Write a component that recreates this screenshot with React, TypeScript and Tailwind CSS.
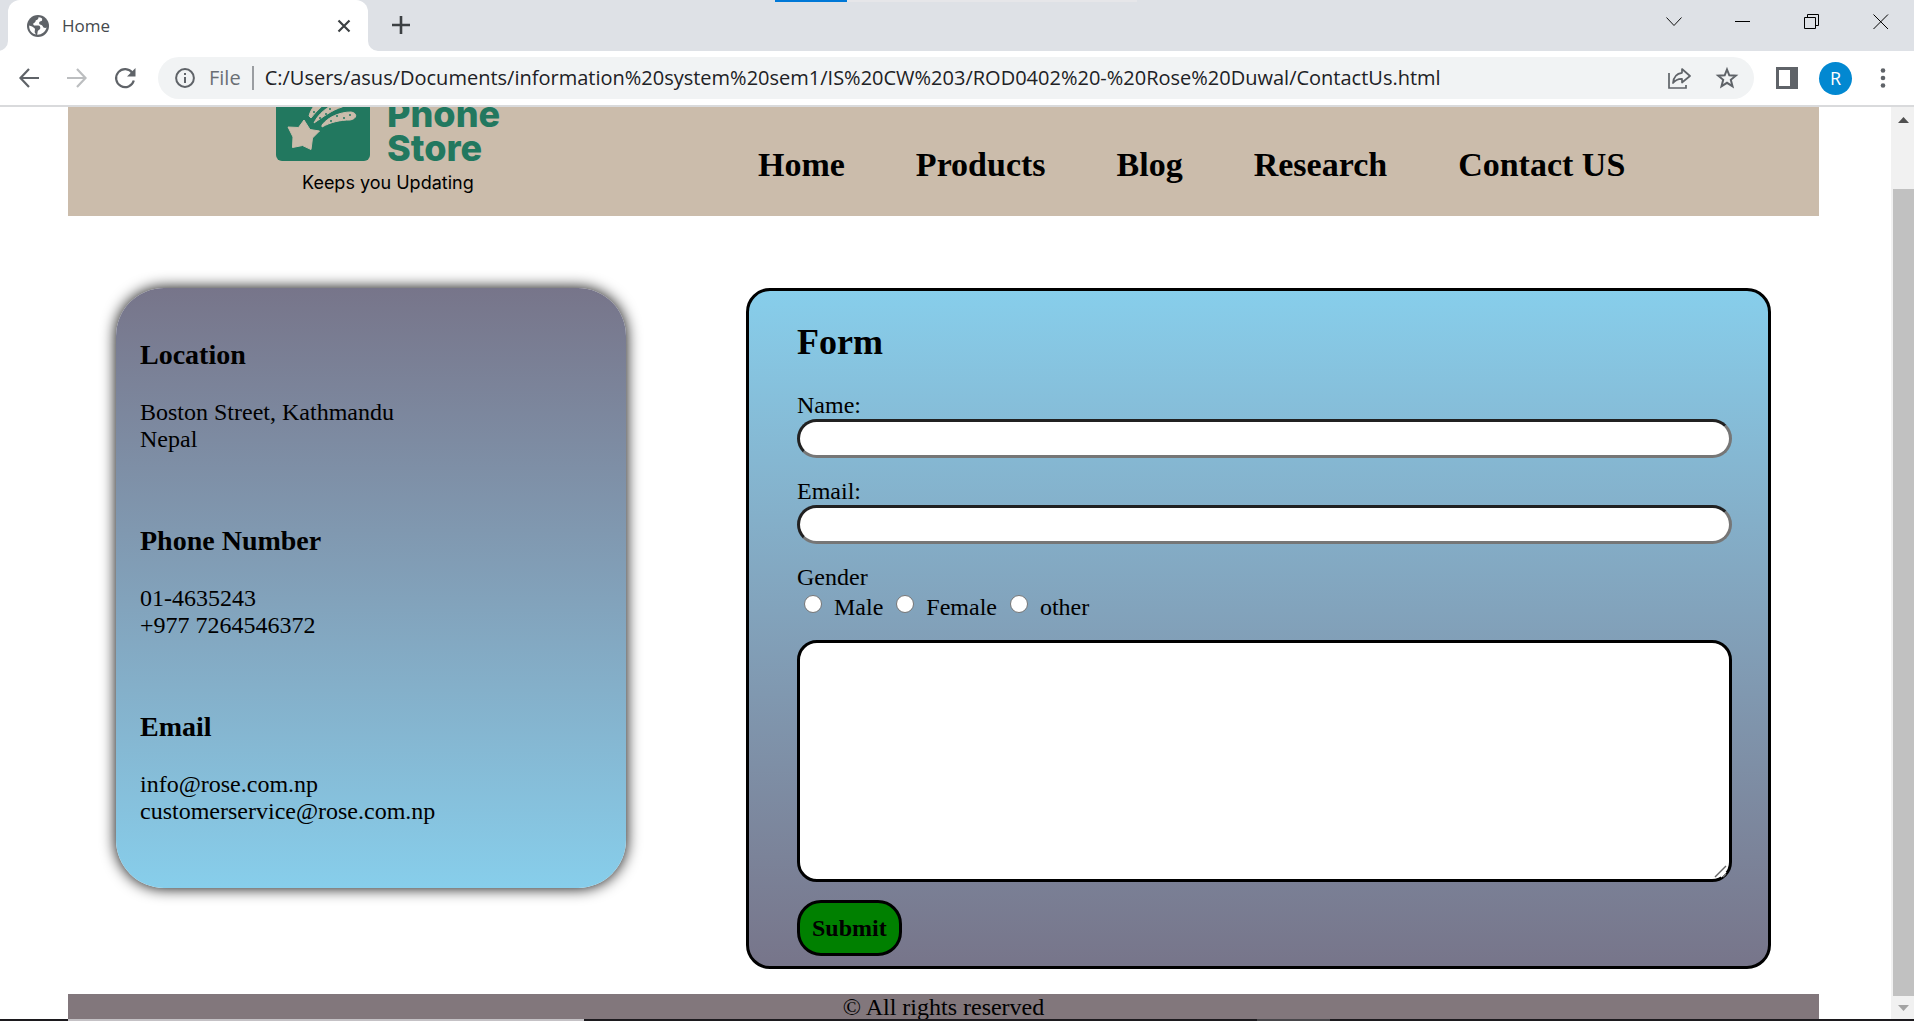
import type { ReactNode } from "react";

function GlobeIcon() {
  return (
    <svg viewBox="0 0 22 22" className="size-[22px]" aria-hidden="true">
      <circle cx="11" cy="11" r="11" fill="#5f6368" />
      <path
        d="M11.5 2.2C11.5 4 10.5 5 8.800 5.300C8.600 7 7.600 8 6.200 8.400C6.200 9.800 6.600 10.400 8 10.400H11.400C12.800 10.600 13.400 11.600 13.300 13C13.200 14.500 12 14.800 11.200 15.400C10.400 16.200 10.700 17.600 10.200 19.700C14 20 18.400 17.300 19.600 12.600C18.400 13.400 17.200 12.900 16.200 12.200C15.600 10.200 14.400 9.700 12.800 9.500C11.600 8.200 12.100 6.600 13.600 6.300C15.200 6.100 15.300 5 15.100 3.400C14 2.600 12.800 2.200 11.500 2.200Z"
        fill="#fff"
      />
      <path d="M2.200 10.500C4 10.900 6.300 12 7.800 13.600C8.300 15 7.600 16 7.700 17C7.800 18 8.500 18.500 9 19.500C4.800 18.800 1.900 15 2.200 10.500Z" fill="#fff" />
    </svg>
  );
}

function IconButton({ label, children }: { label: string; children: ReactNode }) {
  return (
    <button type="button" aria-label={label} className="flex size-6 shrink-0 items-center justify-center">
      {children}
    </button>
  );
}

function TabStrip() {
  return (
    <div className="relative flex h-[51px] shrink-0 items-start bg-[#dee1e6] pl-2">
      <div className="relative flex h-[51px] w-[360px] items-center gap-[13px] rounded-t-xl bg-white pr-[17px] pl-[19px]">
        <GlobeIcon />
        <span className="flex-1 text-[17px] text-[#45494d]">Home</span>
        <button type="button" aria-label="Close tab">
          <svg viewBox="0 0 14 14" className="size-[14px]">
            <path d="M1.500 1.500L12.500 12.500M12.500 1.500L1.500 12.500" stroke="#3c4043" strokeWidth="2.200" />
          </svg>
        </button>
        <svg viewBox="0 0 10 10" className="absolute bottom-0 -left-[10px] size-[10px]" aria-hidden="true">
          <path d="M10 0V10H0A10 10 0 0 0 10 0Z" fill="#fff" />
        </svg>
        <svg viewBox="0 0 10 10" className="absolute -right-[10px] bottom-0 size-[10px]" aria-hidden="true">
          <path d="M0 0V10H10A10 10 0 0 1 0 0Z" fill="#fff" />
        </svg>
      </div>
      <button type="button" aria-label="New tab" className="mt-4 ml-6">
        <svg viewBox="0 0 18 18" className="size-[18px]">
          <path d="M9 0V18M0 9H18" stroke="#3c4043" strokeWidth="2.600" />
        </svg>
      </button>
      <div className="absolute top-0 left-[775px] flex h-0.5 w-[362px] bg-[#e6e6e9]">
        <div className="w-[72px] bg-[#0078d7]" />
      </div>
      <div className="ml-auto flex items-center gap-[53px] pt-3.5 pr-[25px]">
        <button type="button" aria-label="Search tabs">
          <svg viewBox="0 0 16 16" className="size-4" fill="none" stroke="#111" strokeWidth="1">
            <path d="M.500 3.500L8 11.500L15.500 3.500" />
          </svg>
        </button>
        <button type="button" aria-label="Minimize">
          <svg viewBox="0 0 16 16" className="size-4">
            <path d="M0 7.500H15" stroke="#000" />
          </svg>
        </button>
        <button type="button" aria-label="Restore">
          <svg viewBox="0 0 16 16" className="size-4" fill="none" stroke="#000">
            <path d="M.500 3.500H11.500V14.500H.500ZM3.500 3.500V.500H14.500V11.500H11.500" />
          </svg>
        </button>
        <button type="button" aria-label="Close">
          <svg viewBox="0 0 16 16" className="size-4" stroke="#000">
            <path d="M.500 .500L15 15M15 .500L.500 15" />
          </svg>
        </button>
      </div>
    </div>
  );
}

function Toolbar() {
  return (
    <div className="flex h-14 shrink-0 items-center border-b-2 border-[#d9dadc] bg-white pr-[19px] pl-[17px]">
      <div className="flex gap-6">
        <IconButton label="Back">
          <svg viewBox="0 0 24 24" className="size-6" fill="none" stroke="#5f6368" strokeWidth="2.200">
            <path d="M22 12H4M12 3L3.500 12L12 21" />
          </svg>
        </IconButton>
        <IconButton label="Forward">
          <svg viewBox="0 0 24 24" className="size-6" fill="none" stroke="#bcbec0" strokeWidth="2.200">
            <path d="M2 12H20M12 3L20.500 12L12 21" />
          </svg>
        </IconButton>
        <IconButton label="Reload">
          <svg viewBox="0 0 24 24" className="size-6" fill="none">
            <path d="M19.500 7A9 9 0 1 0 20.800 14.500" stroke="#5f6368" strokeWidth="2.200" />
            <path d="M22.500 2V10.500H14Z" fill="#5f6368" />
          </svg>
        </IconButton>
      </div>
      <div className="ml-[21px] flex h-[42px] min-w-0 flex-1 items-center rounded-full bg-[#f1f3f4] pr-[15px] pl-[17px]">
        <svg viewBox="0 0 20 20" className="size-5 shrink-0" aria-hidden="true">
          <circle cx="10" cy="10" r="8.900" fill="none" stroke="#5f6368" strokeWidth="2" />
          <path d="M10 9V15M10 5V7" stroke="#5f6368" strokeWidth="2" />
        </svg>
        <span className="ml-3.5 text-xl text-[#6b6f74]">File</span>
        <span className="mx-[11px] h-6 w-0.5 bg-[#9a9da1]" />
        <input
          aria-label="Address"
          readOnly
          value="C:/Users/asus/Documents/information%20system%20sem1/IS%20CW%203/ROD0402%20-%20Rose%20Duwal/ContactUs.html"
          className="min-w-0 flex-1 bg-transparent text-xl text-[#202124] outline-none"
        />
        <div className="flex gap-6">
          <IconButton label="Share">
            <svg viewBox="0 0 24 24" className="size-6" fill="none" stroke="#5f6368" strokeWidth="1.700">
              <path d="M2 7V22H19V19" />
              <path d="M15 3L23 10L15 16.500V12.800C11 12.600 8.500 13.800 6 17C6.500 11.500 9.500 7.500 15 6.800Z" strokeLinejoin="round" />
            </svg>
          </IconButton>
          <IconButton label="Bookmark">
            <svg viewBox="0 0 24 24" className="size-6" fill="none" stroke="#5f6368" strokeWidth="2">
              <path d="M12 3.500L14.300 9.300L20.800 9.700L15.800 13.800L17.500 20.300L12 16.800L6.500 20.300L8.200 13.800L3.200 9.700L9.700 9.300Z" />
            </svg>
          </IconButton>
        </div>
      </div>
      <button type="button" aria-label="Side panel" className="ml-[22px]">
        <svg viewBox="0 0 22 22" className="size-[22px]">
          <path d="M0 0H22V22H0ZM3 3V19H14V3Z" fill="#5f6368" fillRule="evenodd" />
        </svg>
      </button>
      <button
        type="button"
        aria-label="Profile"
        className="ml-[21px] flex size-[33px] items-center justify-center rounded-full bg-[#0288d1] text-lg text-white"
      >
        R
      </button>
      <button type="button" aria-label="Menu" className="ml-[19px]">
        <svg viewBox="0 0 24 24" className="size-6" fill="#5f6368">
          <circle cx="12" cy="4.500" r="2.300" />
          <circle cx="12" cy="12" r="2.300" />
          <circle cx="12" cy="19.500" r="2.300" />
        </svg>
      </button>
    </div>
  );
}

function Logo() {
  return (
    <a href="#home" className="flex w-[250px] flex-col">
      <div className="flex items-end gap-[17px]">
        <svg viewBox="0 0 94 94" className="size-[94px]" aria-hidden="true">
          <rect width="94" height="94" rx="6" fill="#22785f" />
          <g fill="#cbbcab" stroke="#cbbcab" strokeLinejoin="round">
            <path
              d="M28 53L34 62.500L43.500 64L36.500 71L35 82.500L26.500 78.500L16.500 80.500L17 70L12 60L22.500 60.500Z"
              strokeWidth="1"
            />
            <path d="M33 49C35 41 42 32 54 25C59 22 62 27 57 31C49 36 41 43 35 51Z" />
            <path d="M38 56C42 47 51 40 62 35C69 32 73 37 66 40C56 43 47 50 38 56Z" />
            <path d="M46 58C52 50 64 45 75 45C82 46 81 52 74 53C64 53 55 55 46 60Z" />
          </g>
          <g fill="#22785f">
            <circle cx="38" cy="45" r="1" />
            <circle cx="43" cy="38" r="1" />
            <circle cx="50" cy="47" r="1" />
            <circle cx="54" cy="42" r="1" />
            <circle cx="44" cy="51" r="1" />
            <circle cx="60" cy="39" r="1" />
            <circle cx="55" cy="54" r="1" />
            <circle cx="61" cy="49" r="1" />
            <circle cx="68" cy="51" r="1" />
            <circle cx="74" cy="48" r="1" />
          </g>
        </svg>
        <span className="-mb-1 text-[36px] leading-[34px] font-extrabold text-[#22785f]">
          Phone
          <br />
          Store
        </span>
      </div>
      <span className="mt-2 ml-[26px] text-lg leading-7 text-black">Keeps you Updating</span>
    </a>
  );
}

const navItems = ["Home", "Products", "Blog", "Research", "Contact US"];

function SiteHeader() {
  return (
    <header className="-mt-10 flex h-[149px] shrink-0 items-end bg-[#cbbcab] pl-[208px]">
      <div className="pb-[19px] font-[Inter,sans-serif]">
        <Logo />
      </div>
      <nav className="ml-[232px] flex gap-[71px] pb-8 text-[34px] leading-[38px] font-bold">
        {navItems.map((item) => (
          <a key={item} href={`#${item}`} className="whitespace-nowrap">
            {item}
          </a>
        ))}
      </nav>
    </header>
  );
}

const contactBlocks = [
  { title: "Location", lines: ["Boston Street, Kathmandu", "Nepal"] },
  { title: "Phone Number", lines: ["01-4635243", "+977 7264546372"] },
  { title: "Email", lines: ["info@rose.com.np", "customerservice@rose.com.np"] },
];

function ContactCard() {
  return (
    <section className="flex h-[600px] w-[510px] shrink-0 flex-col gap-[72px] rounded-[48px] bg-linear-to-b from-[#77758a] to-[#87ceeb] px-6 pt-[51px] shadow-[0_0_15px_#000]">
      {contactBlocks.map((block) => (
        <div key={block.title}>
          <h3 className="mb-7 text-[28px] leading-8 font-bold">{block.title}</h3>
          {block.lines.map((line) => (
            <p key={line}>{line}</p>
          ))}
        </div>
      ))}
    </section>
  );
}

const inputClass =
  "h-[39px] w-full rounded-[20px] border-3 border-t-[#212121] border-r-[#767676] border-b-[#767676] border-l-[#212121] bg-white px-4 outline-none";

const radioClass =
  "mb-2 size-[18px] appearance-none rounded-full border border-[#767676] bg-white checked:border-[5px] checked:border-[#0075ff]";

function ContactForm() {
  return (
    <form className="flex min-w-0 flex-1 flex-col rounded-3xl border-3 border-black bg-linear-to-b from-[#87ceeb] to-[#77758a] pt-[31px] pr-9 pb-2.5 pl-12">
      <h2 className="mb-[30px] text-[36px] leading-10 font-bold">Form</h2>
      <label htmlFor="name">Name:</label>
      <input id="name" type="text" className={inputClass} />
      <label htmlFor="email" className="mt-5">
        Email:
      </label>
      <input id="email" type="email" className={inputClass} />
      <fieldset className="mt-5">
        <legend>Gender</legend>
        <div className="flex gap-[13px] pt-[3px] pl-[7px]">
          {["Male", "Female", "other"].map((option) => (
            <label key={option} className="flex items-center gap-3">
              <input type="radio" name="gender" value={option} className={radioClass} />
              {option}
            </label>
          ))}
        </div>
      </fieldset>
      <div className="relative mt-[19px] flex">
        <textarea
          aria-label="Message"
          className="h-[242px] w-full resize-none rounded-[20px] border-3 border-black bg-white p-3 outline-none"
        />
        <svg viewBox="0 0 16 16" className="pointer-events-none absolute right-0.5 bottom-0.5 size-4" aria-hidden="true">
          <path d="M1 13L12 2" stroke="#666" strokeWidth="1.400" />
          <path d="M7 13L12 8" stroke="#fff" strokeWidth="1.500" />
          <path d="M9 13L12 10" stroke="#777" strokeWidth="1.200" />
        </svg>
      </div>
      <button
        type="submit"
        className="mt-[18px] h-14 self-start rounded-3xl border-3 border-black bg-[#008000] px-3 font-bold"
      >
        Submit
      </button>
    </form>
  );
}

function Scrollbar() {
  return (
    <div className="flex w-[23px] shrink-0 flex-col items-center bg-[#f1f1f1] pl-0.5" aria-hidden="true">
      <svg viewBox="0 0 21 82" className="h-[82px] w-[21px]">
        <path d="M5 16L10.500 10L16 16Z" fill="#505050" />
      </svg>
      <div className="w-full flex-1 bg-[#c1c1c1]" />
      <svg viewBox="0 0 21 23" className="h-[23px] w-[21px]">
        <path d="M5 9L10.500 15L16 9Z" fill="#a3a3a3" />
      </svg>
    </div>
  );
}

export default function App() {
  return (
    <div className="flex h-screen flex-col overflow-hidden bg-white font-['Open_Sans',sans-serif]">
      <TabStrip />
      <Toolbar />
      <div className="flex min-h-0 flex-1">
        <div className="flex min-w-0 flex-1 flex-col overflow-hidden pr-[72px] pl-[68px] font-['Liberation_Serif',serif] text-2xl leading-[27px] text-black">
          <SiteHeader />
          <main className="flex shrink-0 items-start gap-[120px] pt-[72px] pr-12 pb-[25px] pl-12">
            <ContactCard />
            <ContactForm />
          </main>
          <footer className="shrink-0 bg-[#82777c] text-center">© All rights reserved</footer>
        </div>
        <Scrollbar />
      </div>
      <div className="flex h-0.5 shrink-0 bg-[#1c1a1e] pl-[68px]">
        <div className="w-[516px] bg-[#c4c1c5]" />
        <div className="ml-[673px] w-[73px] bg-[#48464a]" />
      </div>
    </div>
  );
}
